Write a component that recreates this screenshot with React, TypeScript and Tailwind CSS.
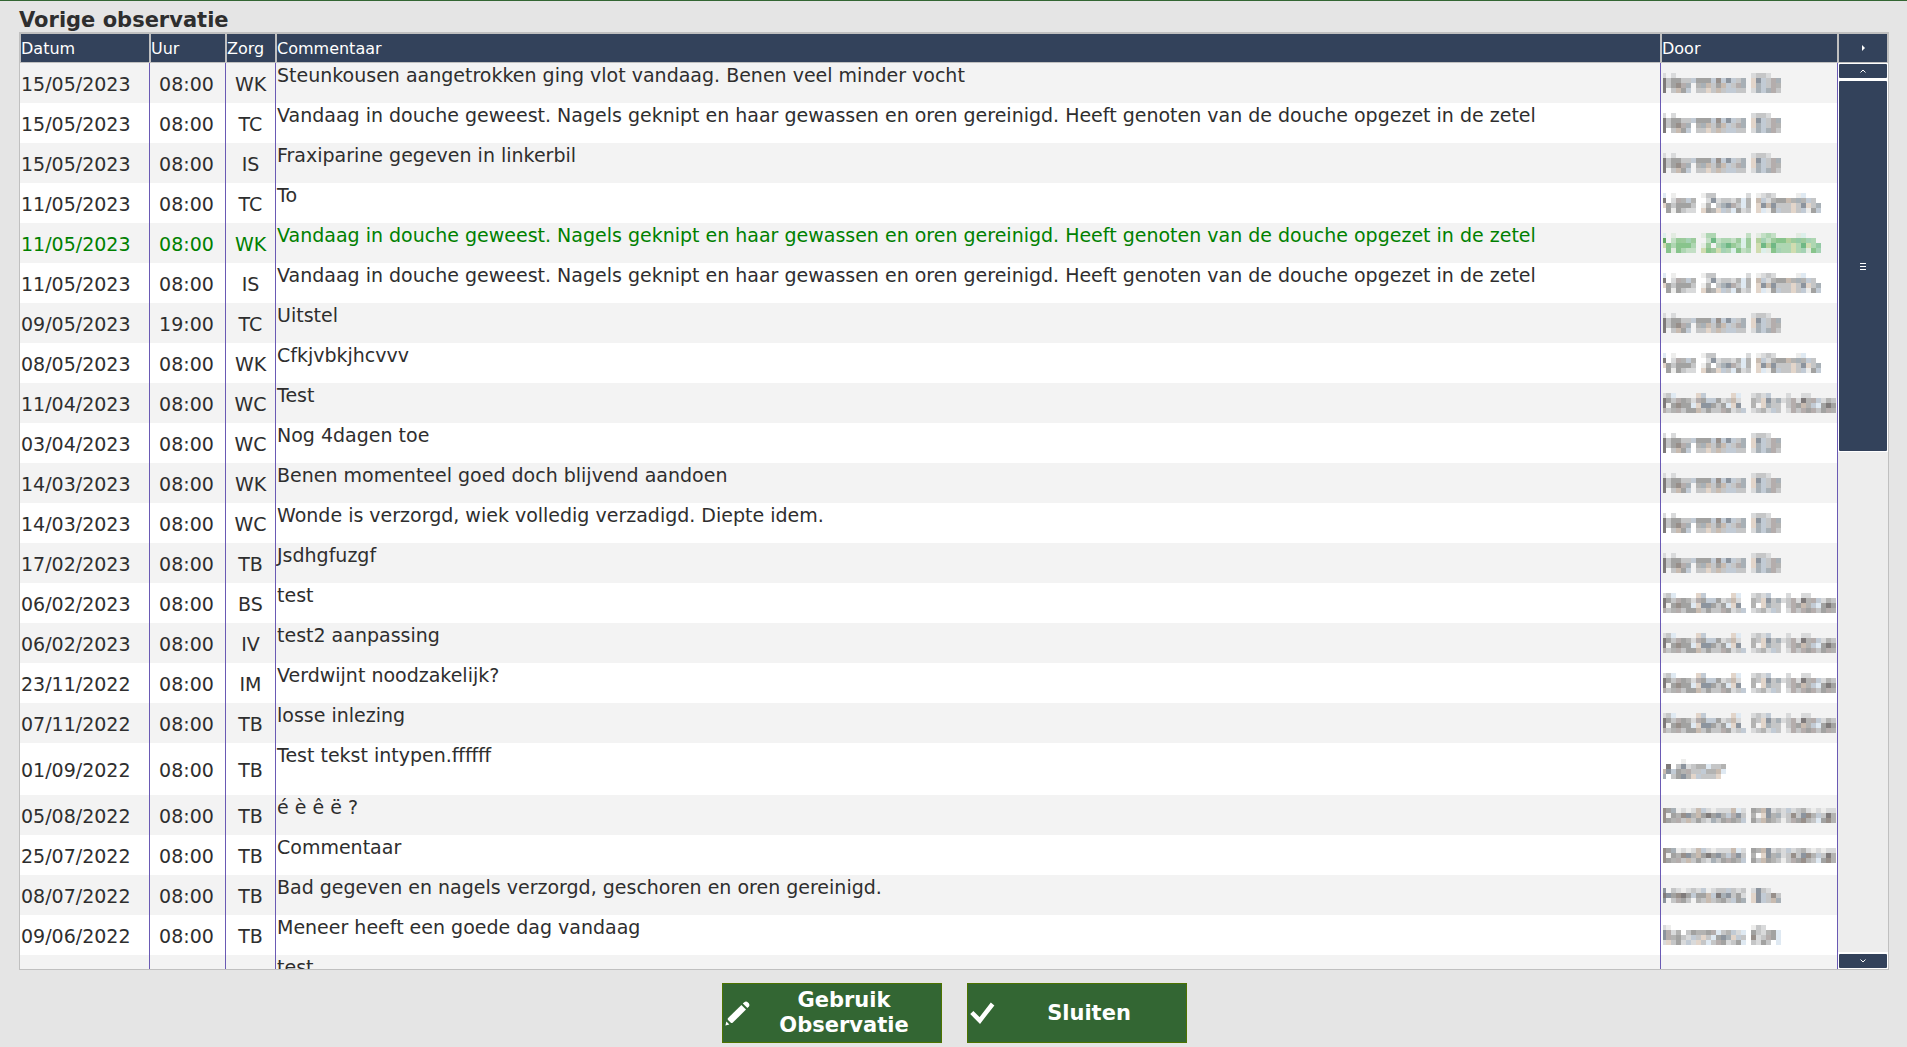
import React from 'react';

interface Observatie {
  datum: string;
  uur: string;
  zorg: string;
  commentaar: string;
  door: string[];
  actief?: boolean;
  hoog?: boolean;
}

interface MosaicProps {
  rows: string[];
  green?: boolean;
}

const BLOCK = 5;

// one character per block, '.' is left open
const GRAYS: Record<string, string> = {
  '0': '#7f7b7b',
  '1': '#8c949e',
  '2': '#a2a2a1',
  '3': '#b3b3b2',
  '4': '#c5c6c7',
  '5': '#d9dadb',
  '6': '#ededec',
  a: '#c8bbb0',
  b: '#e2d5ca',
  c: '#c2cbd5',
  d: '#a8b0b6',
  e: '#dfe9f2',
  f: '#978f8a',
  g: '#b4adac'
};

const GREENS: Record<string, string> = {
  '0': '#62a864',
  '1': '#6fb885',
  '2': '#88c48c',
  '3': '#9ccb9c',
  '4': '#aed6b2',
  '5': '#c3dfc5',
  '6': '#e2ebe1',
  a: '#b3d09c',
  b: '#d0dcb0',
  c: '#a5d2b4',
  d: '#93c9a4',
  e: '#dcefea',
  f: '#7cb97c',
  g: '#98cb98'
};

const NAAM_A = [
  '5.5...............5445..',
  '042244c222cfc1c4d.b1c4gd',
  '042fgd.3da42ac4gd.bdc4g3',
  '0.4a2c.44b4a4cc44.5dcdg4'
];

const NAAM_B = [
  'e.6.....644......5.6545....6e...',
  '0.5g3c3..5154453e3.ac5322a3d3c4',
  'b242224.63.4d1g4e3.b1a1444b41b4d',
  '.262455.b23bc4e254.be62c44b4c62c'
];

const NAAM_C = [
  '54e....bc.....be..545c...5..55.....',
  '024g235g2cc254a5..34b14d54g503gc534',
  '062f22eb11242eb1..3.bd44.4g2a3ce202',
  'g43g422a4244g254c.5435c4.5g4g2g42g3'
];

const NAAM_D = [
  '....6........',
  '.0.415433e443',
  'a1c23g44c33ae',
  'd.4213bc444b.'
];

const NAAM_E = [
  'f2d6565ac56555ae5.23a1545c543565655',
  'f623f13a20213cg14.3.b13d54f41f3c403',
  'f23g4a4245d42g23c.24a23464g2f34e2f3'
];

const NAAM_F = [
  '1.456545c6544c454.5145..',
  '012f02c22ac0d1425.b1c4f4',
  '1.4g24.34a4324c2d.b1c4ad'
];

const NAAM_G = [
  '56................645....',
  '1g53.42332ge43c5e.24532e',
  '1g3245c4b4e21dbc4.f54g2e',
  '5b425c5b4e4g2542e.4524.e'
];

const STANDAARD = 'Vandaag in douche geweest. Nagels geknipt en haar gewassen en oren gereinigd. Heeft genoten van de douche opgezet in de zetel';

const observaties: Observatie[] = [
  { datum: '15/05/2023', uur: '08:00', zorg: 'WK', commentaar: 'Steunkousen aangetrokken ging vlot vandaag. Benen veel minder vocht', door: NAAM_A },
  { datum: '15/05/2023', uur: '08:00', zorg: 'TC', commentaar: STANDAARD, door: NAAM_A },
  { datum: '15/05/2023', uur: '08:00', zorg: 'IS', commentaar: 'Fraxiparine gegeven in linkerbil', door: NAAM_A },
  { datum: '11/05/2023', uur: '08:00', zorg: 'TC', commentaar: 'To', door: NAAM_B },
  { datum: '11/05/2023', uur: '08:00', zorg: 'WK', commentaar: STANDAARD, door: NAAM_B, actief: true },
  { datum: '11/05/2023', uur: '08:00', zorg: 'IS', commentaar: STANDAARD, door: NAAM_B },
  { datum: '09/05/2023', uur: '19:00', zorg: 'TC', commentaar: 'Uitstel', door: NAAM_A },
  { datum: '08/05/2023', uur: '08:00', zorg: 'WK', commentaar: 'Cfkjvbkjhcvvv', door: NAAM_B },
  { datum: '11/04/2023', uur: '08:00', zorg: 'WC', commentaar: 'Test', door: NAAM_C },
  { datum: '03/04/2023', uur: '08:00', zorg: 'WC', commentaar: 'Nog 4dagen toe', door: NAAM_A },
  { datum: '14/03/2023', uur: '08:00', zorg: 'WK', commentaar: 'Benen momenteel goed doch blijvend aandoen', door: NAAM_A },
  { datum: '14/03/2023', uur: '08:00', zorg: 'WC', commentaar: 'Wonde is verzorgd, wiek volledig verzadigd. Diepte idem.', door: NAAM_A },
  { datum: '17/02/2023', uur: '08:00', zorg: 'TB', commentaar: 'Jsdhgfuzgf', door: NAAM_A },
  { datum: '06/02/2023', uur: '08:00', zorg: 'BS', commentaar: 'test', door: NAAM_C },
  { datum: '06/02/2023', uur: '08:00', zorg: 'IV', commentaar: 'test2 aanpassing', door: NAAM_C },
  { datum: '23/11/2022', uur: '08:00', zorg: 'IM', commentaar: 'Verdwijnt noodzakelijk?', door: NAAM_C },
  { datum: '07/11/2022', uur: '08:00', zorg: 'TB', commentaar: 'losse inlezing', door: NAAM_C },
  { datum: '01/09/2022', uur: '08:00', zorg: 'TB', commentaar: 'Test tekst intypen.ffffff', door: NAAM_D, hoog: true },
  { datum: '05/08/2022', uur: '08:00', zorg: 'TB', commentaar: 'é è ê ë ?', door: NAAM_E },
  { datum: '25/07/2022', uur: '08:00', zorg: 'TB', commentaar: 'Commentaar', door: NAAM_E },
  { datum: '08/07/2022', uur: '08:00', zorg: 'TB', commentaar: 'Bad gegeven en nagels verzorgd, geschoren en oren gereinigd.', door: NAAM_F },
  { datum: '09/06/2022', uur: '08:00', zorg: 'TB', commentaar: 'Meneer heeft een goede dag vandaag', door: NAAM_G },
  { datum: '09/06/2022', uur: '08:00', zorg: 'TB', commentaar: 'test', door: [] }
];

const Mosaic: React.FC<MosaicProps> = ({ rows, green }) => {
  const palette = green ? GREENS : GRAYS;
  const width = Math.max(0, ...rows.map((r) => r.length)) * BLOCK;
  return (
    <svg width={width} height={rows.length * BLOCK} shapeRendering="crispEdges" className="block max-w-none" aria-hidden="true">
      {rows.map((row, y) =>
        row.split('').map((c, x) =>
          c === '.' ? null : (
            // the first block is narrower than the rest
            <rect
              key={`${x}-${y}`}
              x={x === 0 ? 2 : x * BLOCK}
              y={y * BLOCK}
              width={x === 0 ? 3 : BLOCK}
              height={BLOCK}
              fill={palette[c]}
            />
          )
        )
      )}
    </svg>
  );
};

const headCell = 'h-[30px] border border-[#c0c0c0] bg-[#33425b] p-0 pt-0.5 text-left text-base leading-5 font-normal text-white';
const bodyCell = 'border-r border-[#6a5ab4] p-0';

const App: React.FC = () => {
  return (
    <div className="flex h-screen flex-col border-t border-[#336633] bg-[#e5e5e5] pr-[18px] pb-1 pl-[19px] font-['DejaVu_Sans','Liberation_Sans',sans-serif] text-[#2e2e2e]">
      <h1 className="flex h-[31px] shrink-0 items-end text-[21px] leading-6 font-bold">Vorige observatie</h1>

      <div className="flex min-h-0 flex-1 border border-[#c0c0c0]">
        <div className="min-w-0 flex-1 overflow-hidden">
          <table className="w-full table-fixed border-separate border-spacing-0">
            <colgroup>
              <col className="w-[130px]" />
              <col className="w-[76px]" />
              <col className="w-[50px]" />
              <col />
              <col className="w-[177px]" />
            </colgroup>
            <thead>
              <tr>
                <th className={headCell}>Datum</th>
                <th className={headCell}>Uur</th>
                <th className={headCell}>Zorg</th>
                <th className={headCell}>Commentaar</th>
                <th className={headCell}>Door</th>
              </tr>
            </thead>
            <tbody className="text-[19px] leading-6">
              {observaties.map((o, i) => (
                <tr
                  key={i}
                  className={`${o.hoog ? 'h-[52px]' : 'h-10'} ${i % 2 === 0 ? 'bg-[#f3f3f3]' : 'bg-white'} ${
                    o.actief ? 'text-[#008000]' : ''
                  }`}
                >
                  <td className={`${bodyCell} pt-0.5 pl-px`}>{o.datum}</td>
                  <td className={`${bodyCell} pt-0.5 pr-0.5 text-center`}>{o.uur}</td>
                  <td className={`${bodyCell} pt-0.5 text-center`}>{o.zorg}</td>
                  <td className={`${bodyCell} truncate pl-px align-top`}>{o.commentaar}</td>
                  <td className={`${bodyCell} overflow-hidden`}>
                    <Mosaic rows={o.door} green={o.actief} />
                  </td>
                </tr>
              ))}
            </tbody>
          </table>
        </div>

        <div className="flex w-[50px] shrink-0 flex-col bg-[#ededed]">
          <button aria-label="Kolommen" className="flex h-[30px] shrink-0 items-center justify-center border border-[#c0c0c0] bg-[#33425b]">
            <svg width="3" height="6" viewBox="0 0 3 6" fill="white">
              <path d="M0 0L3 3L0 6Z" />
            </svg>
          </button>
          <div className="shrink-0 bg-white px-px pt-px pb-[3px]">
            <button aria-label="Omhoog" className="flex h-[14px] w-full items-center justify-center rounded-[1px] bg-[#33425b]">
              <svg width="6" height="4" viewBox="0 0 6 4" fill="none" stroke="white">
                <path d="M0.5 3.5L3 1L5.5 3.5" />
              </svg>
            </button>
          </div>
          <div className="min-h-0 flex-1">
            <div className="h-[42.6%] bg-white px-px pb-px">
              <button aria-label="Schuifbalk" className="flex h-full w-full items-center justify-center rounded-[1px] bg-[#33425b]">
                <svg width="6" height="7" viewBox="0 0 6 7" fill="white" shapeRendering="crispEdges">
                  <rect width="6" height="1" />
                  <rect y="3" width="6" height="1" />
                  <rect y="6" width="6" height="1" />
                </svg>
              </button>
            </div>
          </div>
          <div className="shrink-0 bg-white px-px pt-0.5 pb-px">
            <button aria-label="Omlaag" className="flex h-[14px] w-full items-center justify-center rounded-[1px] bg-[#33425b]">
              <svg width="6" height="4" viewBox="0 0 6 4" fill="none" stroke="white">
                <path d="M0.5 0.5L3 3L5.5 0.5" />
              </svg>
            </button>
          </div>
        </div>
      </div>

      <div className="flex shrink-0 justify-center gap-[25px] pt-[13px]">
        <button className="flex h-[60px] w-[220px] items-center border border-[#4d7300] bg-[#336633] px-0.5 text-[21px] leading-[25px] font-bold text-white">
          <svg width="25" height="25" viewBox="0 0 25 25" fill="white" className="shrink-0">
            <path d="M17.8 2.6L19.6 0.9Q21.3 -0.1 23 1.4L23.8 2.3Q25 4 23.9 5.6L22.4 7.1Z" />
            <path d="M16.4 4L21 8.6L7.6 21.8Q6.6 22.5 5.6 21.6L3 19Q2.3 18 3.1 17Z" />
            <path d="M1.4 20.6L4.4 23.4L0.4 24.6Z" />
          </svg>
          <span className="flex-1 px-2">Gebruik Observatie</span>
        </button>
        <button className="flex h-[60px] w-[220px] items-center border border-[#4d7300] bg-[#336633] px-0.5 text-[21px] leading-[25px] font-bold text-white">
          <svg width="25" height="25" viewBox="0 0 25 25" fill="none" stroke="white" strokeWidth="4.5" className="shrink-0">
            <path d="M1.8 11.5L9.8 19.5L22.6 3" />
          </svg>
          <span className="flex-1 px-2">Sluiten</span>
        </button>
      </div>
    </div>
  );
};

export default App;
